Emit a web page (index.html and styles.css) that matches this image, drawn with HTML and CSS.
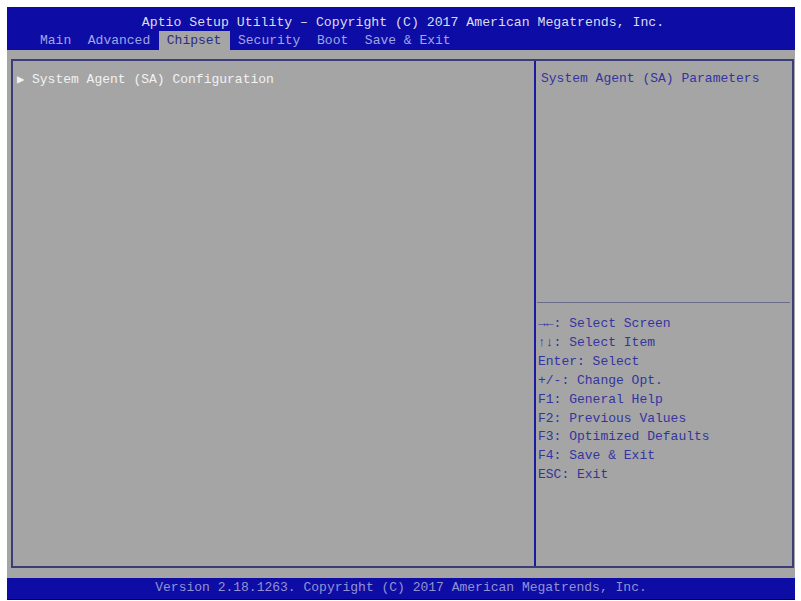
FILE: index.html
```html
<!DOCTYPE html>
<html>
<head>
<meta charset="utf-8">
<link rel="stylesheet" href="styles.css">
</head>
<body>
<div class="screen">
  <header class="header">
    <div class="title">Aptio Setup Utility – Copyright (C) 2017 American Megatrends, Inc.</div>
    <nav class="tabs">
      <span class="tab">Main</span>
      <span class="tab">Advanced</span>
      <span class="tab active">Chipset</span>
      <span class="tab">Security</span>
      <span class="tab">Boot</span>
      <span class="tab">Save &amp; Exit</span>
    </nav>
  </header>
  <main class="body">
    <div class="box">
      <section class="left">
        <div class="item"><span class="arrow">▶</span>System Agent (SA) Configuration</div>
      </section>
      <aside class="right">
        <div class="help">System Agent (SA) Parameters</div>
        <div class="keys">
          <div>→←: Select Screen</div>
          <div>↑↓: Select Item</div>
          <div>Enter: Select</div>
          <div>+/-: Change Opt.</div>
          <div>F1: General Help</div>
          <div>F2: Previous Values</div>
          <div>F3: Optimized Defaults</div>
          <div>F4: Save &amp; Exit</div>
          <div>ESC: Exit</div>
        </div>
      </aside>
    </div>
  </main>
  <footer class="footer">Version 2.18.1263. Copyright (C) 2017 American Megatrends, Inc.</footer>
</div>
</body>
</html>
```

FILE: styles.css
```css
*, *::before, *::after {
  box-sizing: border-box;
}
html, body {
  margin: 0;
  padding: 0;
  background: #ffffff;
}
body {
  font-family: "Liberation Mono", "DejaVu Sans Mono", monospace;
  font-size: 13px;
}
.screen {
  margin: 7px 0 0 7px;
  width: 788px;
  height: 593px;
  display: flex;
  flex-direction: column;
}
.header {
  background: #0d0da6;
  height: 43px;
  display: flex;
  flex-direction: column;
}
.title {
  color: #dcdcec;
  text-align: center;
  padding: 7px 0 0 4px;
  line-height: 17px;
  font-size: 13.2px;
}
.tabs {
  display: flex;
  padding-left: 24.7px;
  height: 19px;
  line-height: 19px;
}
.tab {
  color: #a2a6e2;
  padding: 0 8.3px;
}
.tab.active {
  background: #a5a5a5;
  color: #2c2c86;
}
.body {
  flex: 1;
  background: #a5a5a5;
  padding: 9px 1px 10px 4px;
  display: flex;
}
.box {
  flex: 1;
  border: 2px solid #3c3c78;
  display: flex;
}
.left {
  width: 523px;
  border-right: 2px solid #1a1aa2;
  padding: 10px 0 0 4px;
}
.item {
  color: #f2f2f2;
  line-height: 18px;
  display: flex;
  align-items: center;
}
.arrow {
  font-size: 12px;
  width: 15px;
  color: #f4f4f4;
}
.right {
  flex: 1;
  display: flex;
  flex-direction: column;
}
.help {
  color: #3434a0;
  line-height: 18px;
  padding: 9px 0 0 4px;
  height: 242px;
  margin: 0 2px 0 1px;
  border-bottom: 1px solid #6a6a8c;
}
.keys {
  color: #3434a0;
  line-height: 18.9px;
  padding: 12px 0 0 2px;
}
.footer {
  background: #0d0da6;
  color: #9292d2;
  text-align: center;
  height: 22px;
  line-height: 20px;
  border-bottom: 1px solid #000050;
}
```
